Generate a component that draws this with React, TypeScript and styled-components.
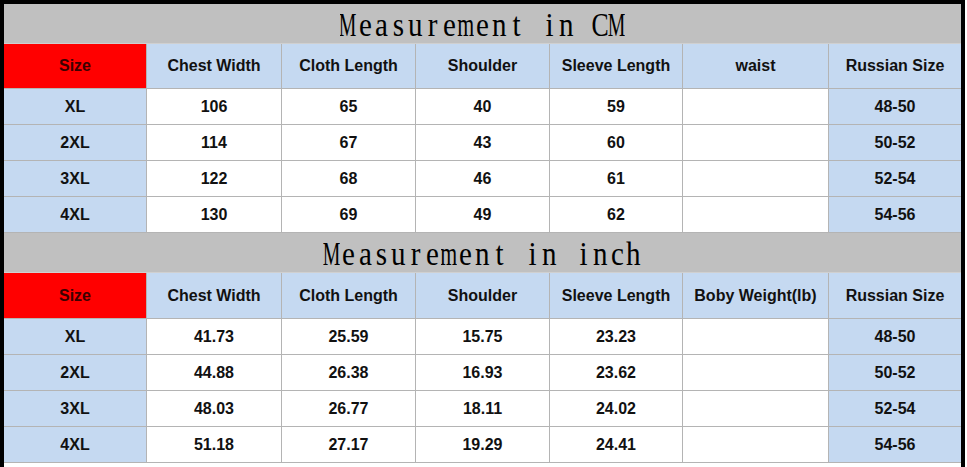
import React from 'react'
import styled, { createGlobalStyle } from 'styled-components'

/////////////////////////////////////////////////////////////////////////////

type Tone = 'red' | 'blue' | 'white'

type SectionType = {
  title: string
  headerHeight: number
  headers: Array<string>
  rows: Array<Array<string>>
}

const sections: Array<SectionType> = [
  {
    title: 'Measurement in CM',
    headerHeight: 45,
    headers: [
      'Size',
      'Chest Width',
      'Cloth Length',
      'Shoulder',
      'Sleeve Length',
      'waist',
      'Russian Size',
    ],
    rows: [
      ['XL', '106', '65', '40', '59', '', '48-50'],
      ['2XL', '114', '67', '43', '60', '', '50-52'],
      ['3XL', '122', '68', '46', '61', '', '52-54'],
      ['4XL', '130', '69', '49', '62', '', '54-56'],
    ],
  },
  {
    title: 'Measurement in inch',
    headerHeight: 46,
    headers: [
      'Size',
      'Chest Width',
      'Cloth Length',
      'Shoulder',
      'Sleeve Length',
      'Boby Weight(lb)',
      'Russian Size',
    ],
    rows: [
      ['XL', '41.73', '25.59', '15.75', '23.23', '', '48-50'],
      ['2XL', '44.88', '26.38', '16.93', '23.62', '', '50-52'],
      ['3XL', '48.03', '26.77', '18.11', '24.02', '', '52-54'],
      ['4XL', '51.18', '27.17', '19.29', '24.41', '', '54-56'],
    ],
  },
]

const lastCol = 6

// the title font in the picture is a serif monospace; we only have a
// proportional serif, so every letter sits in a fixed slot and the wide
// ones get squeezed a bit more
const squeeze: { [key: string]: number } = {
  M: 0.6,
  m: 0.66,
  C: 0.78,
  W: 0.56,
  w: 0.7,
}

const Title = (props: { text: string }) => {
  return (
    <TitleText aria-label={props.text}>
      {props.text.split('').map((ch, idx) => (
        <Glyph key={idx}>
          <GlyphInk $scale={squeeze[ch] || 0.88}>
            {ch === ' ' ? '\u00a0' : ch}
          </GlyphInk>
        </Glyph>
      ))}
    </TitleText>
  )
}

const App: React.FC = () => {
  return (
    <>
      <GlobalStyle />
      <Frame>
        {sections.map((section, sIdx) => (
          <Section key={sIdx} $headerHeight={section.headerHeight}>
            <TitleCell>
              <Title text={section.title} />
            </TitleCell>
            {section.headers.map((h, idx) => (
              <Cell
                key={'h' + idx}
                $tone={idx === 0 ? 'red' : 'blue'}
                $last={idx === lastCol}
              >
                {idx === 0 ? <SizeLabel>{h}</SizeLabel> : h}
              </Cell>
            ))}
            {section.rows.map((row, rIdx) =>
              row.map((value, cIdx) => (
                <Cell
                  key={rIdx + '-' + cIdx}
                  $tone={cIdx === 0 || cIdx === lastCol ? 'blue' : 'white'}
                  $last={cIdx === lastCol}
                >
                  {value}
                </Cell>
              ))
            )}
          </Section>
        ))}
      </Frame>
    </>
  )
}

// Styles

const GlobalStyle = createGlobalStyle`
  html, body {
    margin: 0;
    padding: 0;
    background: #ffffff;
  }
`

const Frame = styled.div`
  box-sizing: border-box;
  width: 965px;
  height: 467px;
  border: 4px solid #000000;
  border-bottom: none;
  background: #ffffff;
  display: flex;
  flex-direction: column;
`

const Section = styled.div<{ $headerHeight: number }>`
  display: grid;
  grid-template-columns: 143px 135px 134px 134px 133px 146px 132px;
  grid-template-rows: 40px ${(p) => p.$headerHeight}px repeat(4, 36px);
`

const TitleCell = styled.div`
  grid-column: 1 / -1;
  box-sizing: border-box;
  background: #c0c0c0;
  border-bottom: 1px solid #d0d0d0;
  display: flex;
  align-items: center;
  justify-content: center;
  overflow: hidden;
`

const TitleText = styled.span`
  display: inline-flex;
  font-family: 'Liberation Serif', 'DejaVu Serif', serif;
  font-size: 33px;
  line-height: 40px;
  color: #000000;
  margin-top: 3px;
`

const Glyph = styled.span`
  display: inline-flex;
  justify-content: center;
  width: 16.8px;
  overflow: hidden;
`

const GlyphInk = styled.span<{ $scale: number }>`
  display: inline-block;
  flex: none;
  transform: scaleX(${(p) => p.$scale});
`

const toneColors: { [key in Tone]: string } = {
  red: '#ff0000',
  blue: '#c5d9f1',
  white: '#ffffff',
}

const Cell = styled.div<{ $tone: Tone; $last: boolean }>`
  box-sizing: border-box;
  background: ${(p) => toneColors[p.$tone]};
  border-right: ${(p) => (p.$last ? 'none' : '1px solid #b4b4b4')};
  border-bottom: 1px solid #b4b4b4;
  display: flex;
  align-items: center;
  justify-content: center;
  font-family: 'Liberation Sans', Arial, sans-serif;
  font-weight: bold;
  font-size: 16px;
  color: #111111;
  white-space: nowrap;
`

const SizeLabel = styled.span`
  color: #3a0000;
`

export default App
